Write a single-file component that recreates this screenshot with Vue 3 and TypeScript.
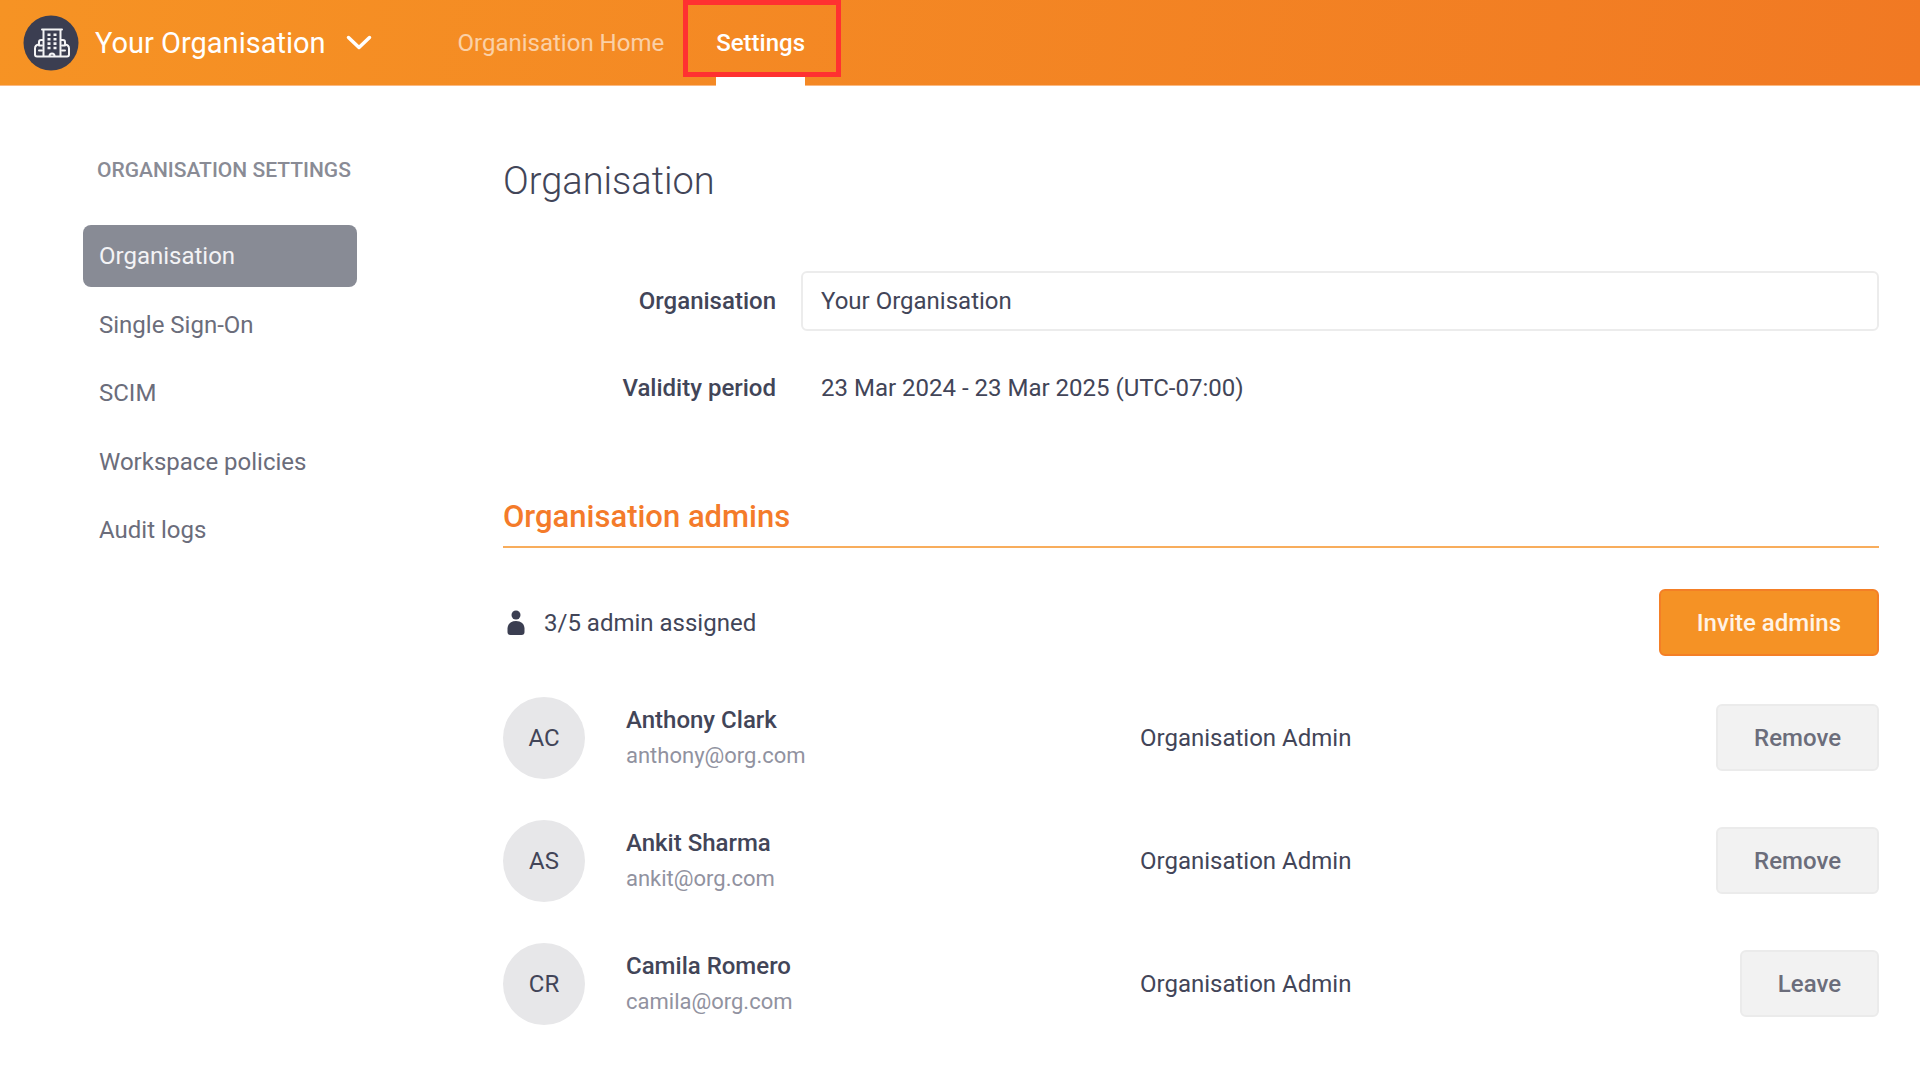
<script setup lang="ts">
import { ref } from 'vue'

interface Admin {
  initials: string
  name: string
  email: string
  role: string
  action: string
}

const sections: string[] = ['Organisation', 'Single Sign-On', 'SCIM', 'Workspace policies', 'Audit logs']
const activeSection = ref('Organisation')
const organisationName = ref('Your Organisation')

const admins: Admin[] = [
  { initials: 'AC', name: 'Anthony Clark', email: 'anthony@org.com', role: 'Organisation Admin', action: 'Remove' },
  { initials: 'AS', name: 'Ankit Sharma', email: 'ankit@org.com', role: 'Organisation Admin', action: 'Remove' },
  { initials: 'CR', name: 'Camila Romero', email: 'camila@org.com', role: 'Organisation Admin', action: 'Leave' },
]
</script>

<template>
  <div class="app">
    <header class="topbar">
      <button class="switcher" type="button">
        <svg class="logo" viewBox="0 0 56 56" aria-hidden="true">
          <circle cx="28" cy="28" r="27.5" fill="#3b3e51" />
          <g fill="none" stroke="#f4f4f6" stroke-width="2" stroke-linecap="round" stroke-linejoin="round">
            <path d="M19 14.500h20M20.500 15v26M37.500 15v26" />
            <path d="M20 25h-2q-2 0-2 2v2.500q-4 .5-4 4v6q0 2 2 2h30q2 0 2-2v-6q0-3.500-4-4v-2.500q0-2-2-2h-2" />
            <path d="M16 30.500h3M16 35.500h3M39 30.500h3M39 35.500h3M26.500 41q0-2.500 2.500-2.500t2.500 2.500" />
          </g>
          <g stroke="#f4f4f6" stroke-width="3" stroke-dasharray="2.600 1.800">
            <path d="M26 18.500v16M32 18.500v16" />
          </g>
        </svg>
        <span>Your Organisation</span>
        <svg class="chevron" viewBox="0 0 26 16" aria-hidden="true">
          <path d="M2.500 2.500 13 12.500 23.500 2.500" fill="none" stroke="#fff" stroke-width="3.500" stroke-linecap="round" stroke-linejoin="round" />
        </svg>
      </button>
      <nav class="tabs">
        <a href="#home" class="tab">Organisation Home</a>
        <a href="#settings" class="tab current" aria-current="page">Settings</a>
      </nav>
    </header>

    <div class="body">
      <aside class="sidebar">
        <h2 class="sidebar-title">ORGANISATION SETTINGS</h2>
        <nav class="sections">
          <a
            v-for="section in sections"
            :key="section"
            href="#"
            class="section"
            :class="{ active: section === activeSection }"
            @click.prevent="activeSection = section"
          >{{ section }}</a>
        </nav>
      </aside>

      <main class="content">
        <h1 class="title">Organisation</h1>

        <form class="form" @submit.prevent>
          <label class="label" for="org-name">Organisation</label>
          <input id="org-name" v-model="organisationName" class="field" type="text" />
          <span class="label">Validity period</span>
          <span class="value">23 Mar 2024 - 23 Mar 2025 (UTC-07:00)</span>
        </form>

        <h2 class="subtitle">Organisation admins</h2>

        <div class="summary">
          <svg class="person" viewBox="0 0 18 26" aria-hidden="true">
            <circle cx="9" cy="5" r="4.500" fill="#3b3e51" />
            <path d="M.5 22v-3.500C.5 14 4 11 9 11s8.500 3 8.500 7.500V22q0 3-3 3H3.500q-3 0-3-3z" fill="#3b3e51" />
          </svg>
          <span>3/5 admin assigned</span>
          <button class="button primary" type="button">Invite admins</button>
        </div>

        <table class="admins">
          <tbody>
            <tr v-for="admin in admins" :key="admin.email">
              <td class="avatar-cell"><span class="avatar">{{ admin.initials }}</span></td>
              <td class="identity">
                <div class="name">{{ admin.name }}</div>
                <div class="email">{{ admin.email }}</div>
              </td>
              <td>{{ admin.role }}</td>
              <td class="action"><button class="button" type="button">{{ admin.action }}</button></td>
            </tr>
          </tbody>
        </table>
      </main>
    </div>
  </div>
</template>

<style>
body {
  margin: 0;
  background: #fff;
}
</style>

<style scoped>
.app,
.app * {
  box-sizing: border-box;
}

.app {
  font-family: Roboto, "Liberation Sans", sans-serif;
  font-size: 24px;
  line-height: 32px;
  color: #424558;
}

button,
input {
  font: inherit;
  color: inherit;
}

a {
  color: inherit;
  text-decoration: none;
}

h1,
h2 {
  margin: 0;
}

.topbar {
  display: flex;
  height: 86px;
  padding-left: 23px;
  color: #fff;
  background: linear-gradient(100deg, #f69324, #f17923);
  border-bottom: 1px solid #fbb981;
}

.switcher {
  display: flex;
  align-items: center;
  padding: 0;
  border: 0;
  background: none;
  font-size: 29px;
}

.logo {
  width: 56px;
  height: 56px;
  margin-right: 16px;
}

.chevron {
  width: 26px;
  height: 16px;
  margin-left: 20px;
}

.tabs {
  display: flex;
  gap: 52px;
  margin-left: 86px;
}

.tab {
  display: flex;
  align-items: center;
  opacity: 0.6;
}

.tab.current {
  position: relative;
  height: 86px;
  border-bottom: 9px solid #fff;
  padding-top: 9px;
  font-weight: 500;
  opacity: 1;
}

/* highlight frame around the current tab */
.tab.current::after {
  content: "";
  position: absolute;
  inset: 0 -36px 0 -33px;
  border: 5px solid #ff3131;
}

.body {
  display: flex;
}

.sidebar {
  flex: none;
  width: 503px;
  padding: 68px 146px 0 83px;
}

.sidebar-title {
  padding-left: 14px;
  font-size: 21px;
  font-weight: 500;
  color: #898b95;
  white-space: nowrap;
}

.sections {
  display: flex;
  flex-direction: column;
  justify-content: space-between;
  height: 336px;
  margin-top: 39px;
}

.section {
  padding: 15px 16px;
  border-radius: 8px;
  color: #6b6d7b;
}

.section.active {
  color: #f3f3f5;
  background: #888b95;
}

.content {
  flex: 1;
  min-width: 0;
  padding: 71px 41px 48px 0;
}

.title {
  font-size: 38px;
  font-weight: 300;
  line-height: 48px;
}

.form {
  display: grid;
  grid-template-columns: 273px 1fr;
  column-gap: 25px;
  row-gap: 41px;
  align-items: center;
  margin-top: 66px;
}

.label {
  font-weight: 500;
  text-align: right;
}

.field {
  width: 100%;
  height: 60px;
  padding: 0 18px;
  border: 2px solid #ececec;
  border-radius: 6px;
  background: #fff;
  outline: none;
}

.value {
  padding-left: 20px;
}

.subtitle {
  margin-top: 92px;
  padding-bottom: 8px;
  border-bottom: 2px solid #f8ad5c;
  font-size: 31px;
  font-weight: 500;
  line-height: 42px;
  color: #f47b2a;
}

.summary {
  display: flex;
  align-items: center;
  margin-top: 41px;
}

.person {
  width: 18px;
  height: 26px;
  margin: 0 19px 0 4px;
}

.button {
  height: 67px;
  padding: 0 36px;
  border: 2px solid #ebebeb;
  border-radius: 6px;
  background: #f2f2f2;
  color: #6b6d7b;
  font-weight: 500;
}

.button.primary {
  margin-left: auto;
  border-color: #f47f26;
  background: #f59225;
  color: #fff3e6;
}

.admins {
  width: 100%;
  margin-top: 20px;
  border-collapse: collapse;
}

.admins td {
  height: 123px;
  padding: 0;
}

.admins .avatar-cell {
  width: 123px;
}

.avatar {
  display: flex;
  align-items: center;
  justify-content: center;
  width: 82px;
  height: 82px;
  border-radius: 50%;
  background: #e7e7e9;
}

.admins .identity {
  width: 514px;
}

.name {
  font-weight: 500;
}

.email {
  margin-top: 4px;
  font-size: 22px;
  color: #9192a0;
}

.admins .action {
  text-align: right;
}
</style>
